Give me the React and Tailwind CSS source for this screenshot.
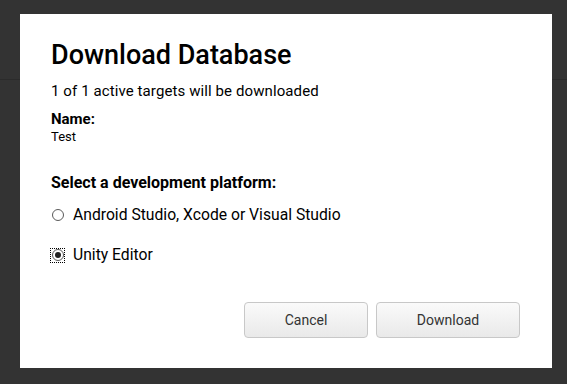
export default function App() {
  return (
    <div className="relative w-[567px] h-[384px] bg-[#333333] overflow-hidden" style={{ fontFamily: "Roboto, 'Liberation Sans', sans-serif" }}>
      <div className="h-[80px] border-b border-[#2b2b2b]" />
      <div className="absolute left-[20px] top-[14px] w-[532px] h-[354px] bg-white flex flex-col pl-[31px] pr-[32px] pt-[25px] text-black">
        <h1 className="text-[27px] leading-[32px] font-medium text-black">Download Database</h1>
        <p className="mt-[11px] text-[15px] leading-[18px] tracking-[0.1px]">1 of 1 active targets will be downloaded</p>
        <p className="mt-[10px] text-[15px] leading-[18px] font-bold">Name:</p>
        <p className="mt-[2px] text-[13px] leading-[14px]">Test</p>
        <p className="mt-[30px] text-[16px] leading-[18px] font-bold">Select a development platform:</p>
        <label className="mt-[14px] flex items-center gap-[9px] text-[15.7px] leading-[18px]">
          <span className="w-[12px] h-[12px] ml-[1px] rounded-full border border-[#5a5a5a] bg-white" />
          <span>Android Studio, Xcode or Visual Studio</span>
        </label>
        <label className="mt-[22px] flex items-center gap-[9px] text-[15.7px] leading-[18px]">
          <span className="w-[13px] h-[13px] outline outline-1 outline-dotted outline-black flex items-center justify-center">
            <span className="w-[12px] h-[12px] rounded-full border border-[#5a5a5a] bg-white flex items-center justify-center">
              <span className="w-[6px] h-[6px] rounded-full bg-[#222]" />
            </span>
          </span>
          <span>Unity Editor</span>
        </label>
        <div className="mt-auto mb-[30px] flex justify-end gap-[8px]">
          <button className="w-[124px] h-[36px] pt-[1px] rounded-[4px] border border-[#c8c8c8] bg-gradient-to-b from-[#fafafa] to-[#e9e9e9] text-[14px] text-[#333]">Cancel</button>
          <button className="w-[144px] h-[36px] pt-[1px] rounded-[4px] border border-[#c8c8c8] bg-gradient-to-b from-[#fafafa] to-[#e9e9e9] text-[14px] text-[#333]">Download</button>
        </div>
      </div>
    </div>
  );
}
